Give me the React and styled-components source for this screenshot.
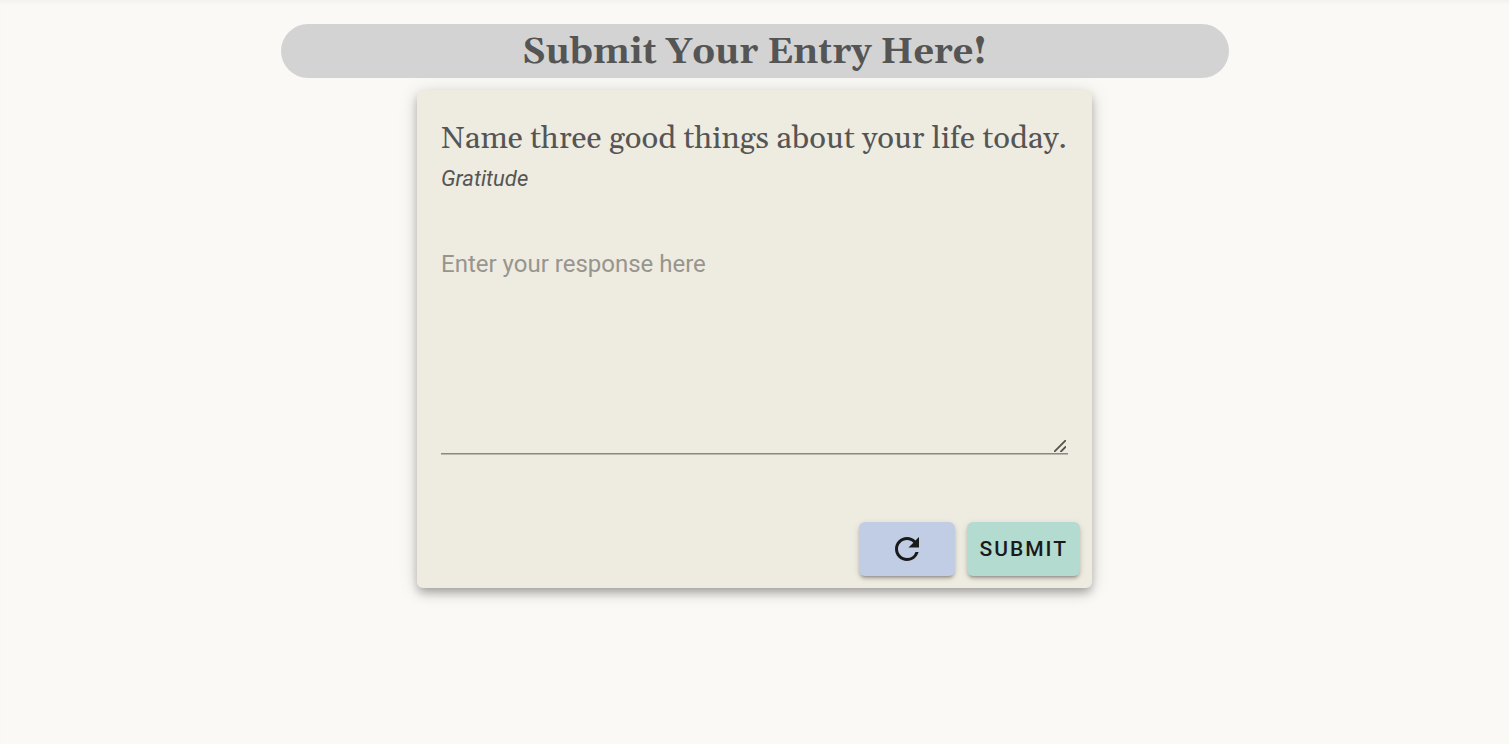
import React, { useState } from "react";
import styled, { createGlobalStyle } from "styled-components";
import { MdRefresh } from "react-icons/md";

const GlobalStyle = createGlobalStyle`
  *, *::before, *::after { box-sizing: border-box; }
  body {
    margin: 0;
    background: #faf9f5;
    color: #555;
    font-family: Roboto, "Liberation Sans", sans-serif;
  }
`;

const Page = styled.main`
  display: flex;
  flex-direction: column;
  align-items: center;
  gap: 12px;
  min-height: 100vh;
  padding: 24px;
  box-shadow: inset 0 4px 4px -2px rgba(0, 0, 0, 0.04);
`;

const Banner = styled.h1`
  width: 100%;
  max-width: 948px;
  margin: 0;
  padding-top: 4px;
  border-radius: 27px;
  background: #d3d3d3;
  font-family: Gelasio, Georgia, "Liberation Serif", serif;
  font-size: 36px;
  font-weight: 700;
  line-height: 50px;
  text-align: center;
`;

const Card = styled.form`
  width: 100%;
  max-width: 675px;
  border-radius: 6px;
  background: #eeebe0;
  box-shadow: 0 5px 8px -2px rgba(0, 0, 0, 0.2), 0 6px 12px rgba(0, 0, 0, 0.14),
    0 2px 20px rgba(0, 0, 0, 0.12);
`;

const CardContent = styled.div`
  display: flex;
  flex-direction: column;
  padding: 24px 24px 56px;
`;

const Question = styled.h2`
  margin: 0;
  font-family: Gelasio, Georgia, "Liberation Serif", serif;
  font-size: 31px;
  font-weight: 400;
  line-height: 50px;
`;

const Category = styled.p`
  margin: 0 0 48px;
  font-size: 22px;
  font-style: italic;
  font-weight: 400;
  line-height: 30px;
`;

const ResponseField = styled.div`
  position: relative;
`;

const Response = styled.textarea`
  display: block;
  width: 100%;
  height: 212px;
  padding: 6px 0;
  border: 0;
  border-bottom: 1px solid #8a8982;
  border-radius: 0;
  outline: 0;
  background: transparent;
  box-shadow: 0 1px 0 #bab8af;
  color: #333;
  font: 400 24px/32px Roboto, "Liberation Sans", sans-serif;
  resize: vertical;

  &::placeholder {
    color: #97958e;
    opacity: 1;
  }

  &::-webkit-resizer {
    background: transparent;
  }
`;

const ResizeGrip = styled.svg`
  position: absolute;
  right: 2px;
  bottom: 2px;
  pointer-events: none;
`;

const CardActions = styled.div`
  display: flex;
  justify-content: flex-end;
  gap: 12px;
  padding: 12px;
`;

const ActionButton = styled.button`
  display: inline-flex;
  align-items: center;
  justify-content: center;
  min-width: 96px;
  height: 54px;
  padding: 0 12px;
  border: 0;
  border-radius: 6px;
  background: ${({ $color }) => $color};
  color: #1a1a1a;
  box-shadow: 0 4px 2px -3px rgba(0, 0, 0, 0.2), 0 3px 3px rgba(0, 0, 0, 0.14),
    0 2px 7px rgba(0, 0, 0, 0.12);
  font: 500 21px/36px Roboto, "Liberation Sans", sans-serif;
  letter-spacing: 2px;
  text-transform: uppercase;
  cursor: pointer;
`;

export default function App() {
  const [response, setResponse] = useState("");

  return (
    <>
      <GlobalStyle />
      <Page>
        <Banner>Submit Your Entry Here!</Banner>
        <Card onSubmit={(event) => event.preventDefault()}>
          <CardContent>
            <Question id="question">
              Name three good things about your life today.
            </Question>
            <Category>Gratitude</Category>
            <ResponseField>
              <Response
                aria-labelledby="question"
                placeholder="Enter your response here"
                value={response}
                onChange={(event) => setResponse(event.target.value)}
              />
              <ResizeGrip width="12" height="12" viewBox="0 0 12 12" aria-hidden="true">
                <path d="M0 12 12 0M6.5 12 12 6.5" stroke="#55534e" strokeWidth="1.8" />
              </ResizeGrip>
            </ResponseField>
          </CardContent>
          <CardActions>
            <ActionButton type="button" $color="#c0cde4" aria-label="New prompt">
              <MdRefresh size={36} />
            </ActionButton>
            <ActionButton type="submit" $color="#b4dbd0">
              Submit
            </ActionButton>
          </CardActions>
        </Card>
      </Page>
    </>
  );
}
